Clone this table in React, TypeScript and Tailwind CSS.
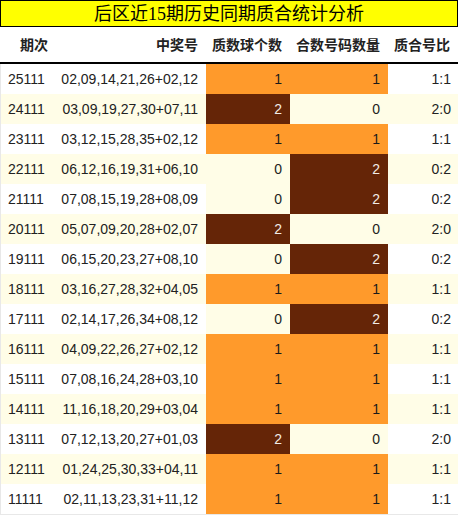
import React from "react";

type Row = [string, string, number, number];

const rows: Row[] = [
  ["25111", "02,09,14,21,26+02,12", 1, 1],
  ["24111", "03,09,19,27,30+07,11", 2, 0],
  ["23111", "03,12,15,28,35+02,12", 1, 1],
  ["22111", "06,12,16,19,31+06,10", 0, 2],
  ["21111", "07,08,15,19,28+08,09", 0, 2],
  ["20111", "05,07,09,20,28+02,07", 2, 0],
  ["19111", "06,15,20,23,27+08,10", 0, 2],
  ["18111", "03,16,27,28,32+04,05", 1, 1],
  ["17111", "02,14,17,26,34+08,12", 0, 2],
  ["16111", "04,09,22,26,27+02,12", 1, 1],
  ["15111", "07,08,16,24,28+03,10", 1, 1],
  ["14111", "11,16,18,20,29+03,04", 1, 1],
  ["13111", "07,12,13,20,27+01,03", 2, 0],
  ["12111", "01,24,25,30,33+04,11", 1, 1],
  ["11111", "02,11,13,23,31+11,12", 1, 1],
];

const grid = "grid grid-cols-[58px_147px_84px_98px_70px]";

function countCell(n: number) {
  if (n === 2) return "bg-[#652507] text-[#f2ece6]";
  if (n === 1) return "bg-[#ff9a2b] text-[#1a1a1a]";
  return "bg-[#fffde7] text-[#222]";
}

export default function App() {
  return (
    <div className="w-[458px] bg-white font-['Liberation_Sans','Noto_Sans_CJK_SC',sans-serif] text-[14px] text-[#222]">
      <div className="h-[27px] border border-black bg-[#ffff00] flex items-center justify-center font-['Liberation_Serif','Noto_Sans_CJK_SC',serif] text-[18px] leading-none text-black">
        后区近15期历史同期质合统计分析
      </div>
      <div className={`${grid} h-[37px] border-b-2 border-black font-bold font-['Noto_Sans_CJK_SC',sans-serif] items-center`}>
        <div className="pl-[20px] whitespace-nowrap">期次</div>
        <div className="text-right pr-[7px]">中奖号</div>
        <div className="text-right pr-[7px]">质数球个数</div>
        <div className="text-right pr-[7px]">合数号码数量</div>
        <div className="text-right pr-[7px]">质合号比</div>
      </div>
      <div className="border-x border-b border-[#e8e8e8]">
        {rows.map(([issue, nums, p, c], i) => {
          const stripe = i % 2 === 1 ? "bg-[#fffde7]" : "bg-white";
          return (
            <div key={issue} className={`${grid} h-[30px] items-stretch leading-[30px]`}>
              <div className={`${stripe} pl-[7px]`}>{issue}</div>
              <div className={`${stripe} text-right pr-[8px] whitespace-nowrap`}>{nums}</div>
              <div className={`${countCell(p)} text-right pr-[8px]`}>{p}</div>
              <div className={`${countCell(c)} text-right pr-[8px]`}>{c}</div>
              <div className={`${stripe} text-right pr-[7px]`}>
                {p}:{c}
              </div>
            </div>
          );
        })}
      </div>
    </div>
  );
}
